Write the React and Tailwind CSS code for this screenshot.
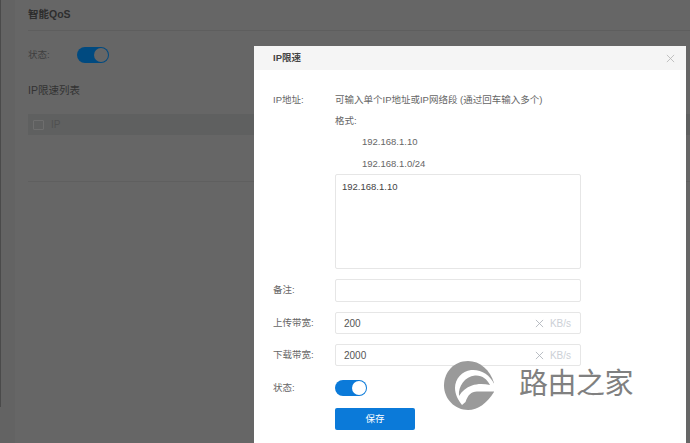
const F = '[font-family:"Liberation_Sans","Noto_Sans_CJK_SC",sans-serif]';

function Toggle({ track, knob }) {
  return (
    <div className={`flex h-4 w-8 items-center justify-end rounded-full pr-px ${track}`}>
      <div className={`h-[14px] w-[14px] rounded-full ${knob}`} />
    </div>
  );
}

function Row({ label, children, className = "" }) {
  return (
    <div className={`flex items-center ${className}`}>
      <div className="w-[62px] shrink-0 text-[9.5px] text-[#666]">{label}</div>
      {children}
    </div>
  );
}

function X({ className, size = 9 }) {
  return (
    <svg width={size} height={size} viewBox="0 0 10 10" className={className} fill="none" stroke="currentColor" strokeWidth="0.9">
      <path d="M1 1l8 8M9 1l-8 8" />
    </svg>
  );
}

function UnitInput({ value }) {
  return (
    <div className="flex h-[22px] w-[246px] items-center rounded-[2px] border border-[#e6e6e6] pl-[8px] pr-[9px] text-[10px]">
      <span className="flex-1 text-[#555]">{value}</span>
      <X className="mr-[6px] text-[#a9aeb6]" />
      <span className="text-[#ccd0d6]">KB/s</span>
    </div>
  );
}

export default function App() {
  return (
    <div className={`relative h-[443px] w-[690px] overflow-hidden bg-[#666666] ${F}`}>
      {/* dimmed page */}
      <div className="flex h-full">
        <div className="flex h-full w-[15px] shrink-0 bg-[#636363]">
          <div className="h-[407px] w-px bg-[#4a4a4a]" />
        </div>
        <div className="flex-1 pl-[13px]">
          <div className="flex h-[31px] items-center border-b border-[#5e5e5e] text-[10.5px] font-bold text-[#2e2e2e]">
            智能QoS
          </div>
          <div className="mt-[16px] flex h-4 items-center">
            <div className="w-[49px] text-[9.5px] text-[#3f3f3f]">状态:</div>
            <Toggle track="bg-[#004a80]" knob="bg-[#666666]" />
          </div>
          <div className="mt-[19px] text-[10.5px] leading-4 text-[#333]">IP限速列表</div>
          <div className="mt-[16px] flex h-[21px] items-center bg-[#5f6060] pl-[5px]">
            <div className="h-[10px] w-[11px] rounded-[1px] border border-[#6e6e6e]" />
            <span className="ml-[7px] text-[10px] text-[#505050]">IP</span>
          </div>
          <div className="mt-[46px] h-px bg-[#5f5f5f]" />
        </div>
      </div>

      {/* dialog */}
      <div className="absolute left-[254px] top-[46px] h-[420px] w-[432px] rounded-t-[2px] bg-white">
        <div className="relative flex h-[24px] items-center bg-[#f5f5f5] pl-[19px] text-[9.5px] font-bold text-[#444]">
          IP限速
          <X className="absolute right-[11px] top-[8px] text-[#b5b5b5]" size={9} />
        </div>
        <div className="pl-[19px] pt-[22px]">
          <div className="flex">
            <div className="w-[62px] shrink-0 pt-[1px] text-[9.5px] leading-[14px] text-[#666]">IP地址:</div>
            <div className="text-[9.5px] text-[#666]">
              <div className="h-[21px] leading-[16px]">可输入单个IP地址或IP网络段 (通过回车输入多个)</div>
              <div className="h-[21px] leading-[16px]">格式:</div>
              <div className="h-[22px] pl-[27px] leading-[16px]">192.168.1.10</div>
              <div className="h-[18px] pl-[27px] leading-[16px]">192.168.1.0/24</div>
              <div className="h-[95px] w-[246px] rounded-[2px] border border-[#e6e6e6] pl-[6px] pt-[4px] leading-[16px] text-[#444]">
                192.168.1.10
              </div>
            </div>
          </div>
          <Row label="备注:" className="mt-[10px]">
            <div className="h-[23px] w-[246px] rounded-[2px] border border-[#e6e6e6]" />
          </Row>
          <Row label="上传带宽:" className="mt-[10px]">
            <UnitInput value="200" />
          </Row>
          <Row label="下载带宽:" className="mt-[10px]">
            <UnitInput value="2000" />
          </Row>
          <Row label="状态:" className="mt-[14px]">
            <Toggle track="bg-[#0b7ad9]" knob="bg-white" />
          </Row>
          <div className="ml-[62px] mt-[12px] flex h-[22px] w-[80px] items-center justify-center rounded-[2px] bg-[#0b7ad9] text-[9.5px] text-white">
            保存
          </div>
        </div>
      </div>

      {/* watermark */}
      <svg className="absolute left-[440px] top-[358px]" width="64" height="60" viewBox="0 0 64 60">
        <path
          fill="#9a9a9a"
          d="M28 3C14 3 4 14 4 27.500C4 41 15 52 28 52C38 52 47 45 54 34L54 25C50 12 40 3 28 3z"
        />
        <path
          fill="#fff"
          d="M54 25.500C50 17 41 11 31 12C22 13 15 21 15 30C15 36 18 42 22 47L25.500 44C28 37 31 33.500 37 33.500L54.500 33.500L56 33L58 20z"
        />
        <path
          fill="#9a9a9a"
          d="M19 38C18 28 25 18.500 35 17.500C42 17 47 21 50 27C44 25.500 37 25.500 32 27.500C26 29.500 22 33 19 38z"
        />
      </svg>
      <div className="absolute left-[519px] top-[365px] text-[29px] font-normal leading-8 tracking-[-0.5px] text-[#808080] [font-family:'Noto_Sans_CJK_SC',sans-serif]">
        路由之家
      </div>
    </div>
  );
}
